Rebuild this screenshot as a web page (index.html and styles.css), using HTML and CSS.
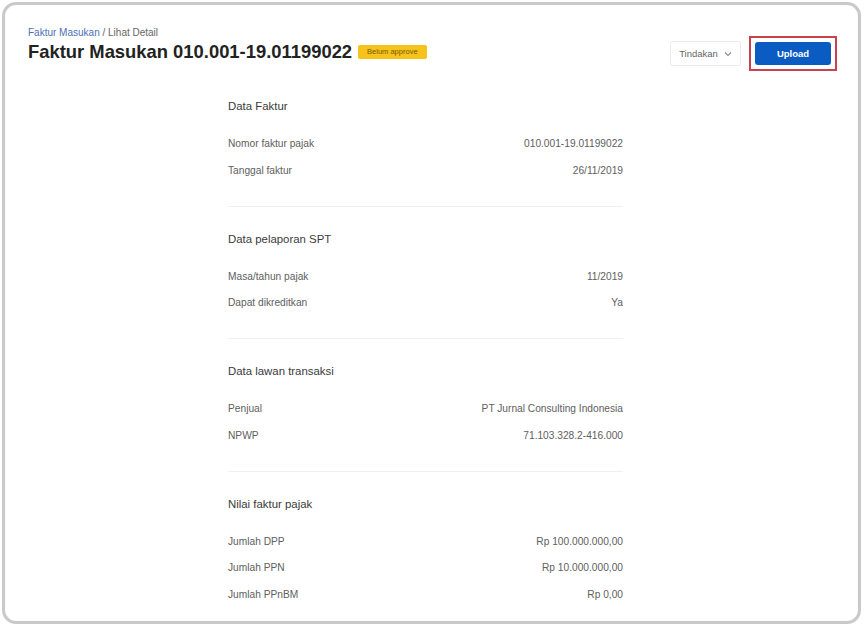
FILE: index.html
```html
<!DOCTYPE html>
<html lang="id">
<head>
<meta charset="utf-8">
<title>Faktur Masukan 010.001-19.01199022</title>
<link rel="stylesheet" href="styles.css">
</head>
<body>
<div class="frame">
  <header class="page-header">
    <div class="heading">
      <div class="breadcrumb"><a class="crumb-link">Faktur Masukan</a> / Lihat Detail</div>
      <div class="title-row">
        <h1 class="title">Faktur Masukan 010.001-19.01199022</h1>
        <span class="badge">Belum approve</span>
      </div>
    </div>
    <div class="actions">
      <button class="btn-menu">Tindakan
        <svg class="chev" width="8" height="6" viewBox="0 0 8 6"><path d="M1 1.5 L4 4.5 L7 1.5" fill="none" stroke="#8a8a8a" stroke-width="1.1"/></svg>
      </button>
      <div class="highlight"><button class="btn-primary">Upload</button></div>
    </div>
  </header>

  <main class="content">
    <section class="section">
      <h2 class="section-title">Data Faktur</h2>
      <div class="row"><span>Nomor faktur pajak</span><span>010.001-19.01199022</span></div>
      <div class="row"><span>Tanggal faktur</span><span>26/11/2019</span></div>
      <hr class="divider">
    </section>
    <section class="section">
      <h2 class="section-title">Data pelaporan SPT</h2>
      <div class="row"><span>Masa/tahun pajak</span><span>11/2019</span></div>
      <div class="row"><span>Dapat dikreditkan</span><span>Ya</span></div>
      <hr class="divider">
    </section>
    <section class="section">
      <h2 class="section-title">Data lawan transaksi</h2>
      <div class="row"><span>Penjual</span><span>PT Jurnal Consulting Indonesia</span></div>
      <div class="row"><span>NPWP</span><span>71.103.328.2-416.000</span></div>
      <hr class="divider">
    </section>
    <section class="section">
      <h2 class="section-title">Nilai faktur pajak</h2>
      <div class="row"><span>Jumlah DPP</span><span>Rp 100.000.000,00</span></div>
      <div class="row"><span>Jumlah PPN</span><span>Rp 10.000.000,00</span></div>
      <div class="row"><span>Jumlah PPnBM</span><span>Rp 0,00</span></div>
    </section>
  </main>
</div>
</body>
</html>
```

FILE: styles.css
```css
* { box-sizing: border-box; }
html, body {
  margin: 0;
  padding: 0;
  background: #ffffff;
  font-family: "Liberation Sans", Arial, sans-serif;
  color: #333;
}
.frame {
  width: 859px;
  height: 622px;
  margin: 2px 3px 4px 2px;
  border: 3px solid #c9c9c9;
  border-radius: 14px;
  background: #fff;
  overflow: hidden;
  box-shadow: inset 0 0 1px #dcdcdc;
}
.page-header {
  display: flex;
  justify-content: space-between;
  align-items: flex-start;
  padding: 21px 21px 0 23px;
}
.breadcrumb {
  font-size: 10px;
  line-height: 13px;
  color: #666;
}
.crumb-link { color: #4d6fb3; }
.title-row {
  display: flex;
  align-items: center;
  margin-top: 2px;
}
.title {
  margin: 0;
  font-size: 18.4px;
  line-height: 22px;
  font-weight: 700;
  color: #222;
}
.badge {
  margin-left: 6px;
  background: #f6c21c;
  color: #7a5a00;
  font-size: 7.5px;
  line-height: 14px;
  height: 14px;
  padding: 0 9px;
  border-radius: 2px;
}
.actions {
  display: flex;
  align-items: center;
  margin-top: 10px;
}
.btn-menu {
  width: 71px;
  height: 25px;
  border: 1px solid #ececec;
  background: #fff;
  border-radius: 2px;
  font-family: inherit;
  font-size: 9.5px;
  color: #666;
  display: flex;
  align-items: center;
  justify-content: center;
  gap: 6px;
  padding: 0;
}
.chev { display: block; margin-top: 1px; }
.highlight {
  margin-left: 8px;
  border: 2px solid #c9434c;
  padding: 4px;
}
.btn-primary {
  display: block;
  width: 76px;
  height: 23px;
  border: 0;
  border-radius: 3px;
  background: #0a5cc2;
  color: #fff;
  font-family: inherit;
  font-size: 9.5px;
  font-weight: 700;
  padding: 0;
}
.content {
  width: 395px;
  margin-left: 223px;
  margin-top: 28px;
}
.section-title {
  margin: 0;
  font-size: 11.4px;
  line-height: 14px;
  font-weight: 400;
  color: #3a3a3a;
}
.row {
  display: flex;
  justify-content: space-between;
  font-size: 10.2px;
  line-height: 12px;
  color: #606060;
  margin-top: 14.5px;
}
.section-title + .row { margin-top: 25px; }
.divider {
  border: 0;
  height: 1px;
  background: #f0f0f0;
  margin: 29px 0 25px 0;
}
```
